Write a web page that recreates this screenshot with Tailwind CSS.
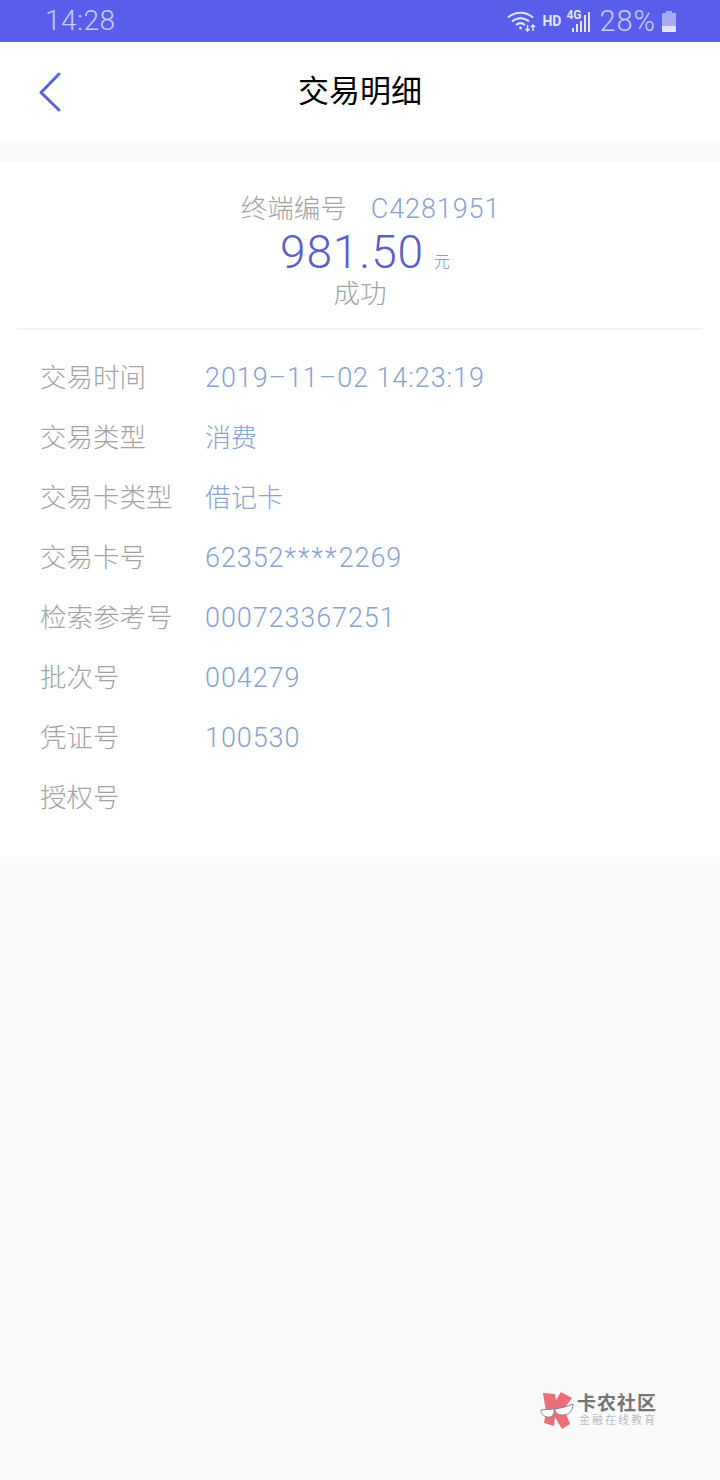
<!DOCTYPE html>
<html lang="en">
<head>
    <meta charset="UTF-8">
    <meta name="viewport" content="width=device-width, initial-scale=1.0">
    <title>交易明细</title>
    <script src="https://cdn.jsdelivr.net/npm/@tailwindcss/browser@4"></script>
</head>
<body class="overflow-hidden">
<div class="relative w-[720px] h-[1480px] bg-[#fafafa] font-['Roboto','Noto_Sans_CJK_SC',sans-serif] font-light">
    <!-- status bar -->
    <div class="h-[42px] bg-[#585eea] flex items-center justify-between pl-[45px] pr-[44px] text-[#c9cbf8]">
        <span class="text-[28px] tracking-[0.5px] leading-none">14:28</span>
        <div class="flex items-center">
            <svg width="30" height="22" viewBox="0 0 30 22" fill="none" stroke="#e3e4fc" stroke-width="2">
                <path d="M1 7.5C8 1 19 1 26 7.5"/>
                <path d="M5 11.5C10 7 17 7 22 11.5"/>
                <path d="M9 15C12 12.5 15 12.5 18 15"/>
                <circle cx="13.5" cy="18" r="1.4" fill="#e3e4fc" stroke="none"/>
                <path d="M20.500 15v6M18.500 19l2 2 2-2M26 21v-6M24 17l2-2 2 2" stroke-width="1.500"/>
            </svg>
            <span class="ml-[5px] text-[14px] leading-none font-bold text-[#e3e4fc]">HD</span>
            <div class="relative ml-[5px] w-[25px] h-[24px]">
                <span class="absolute left-0 top-0 text-[12px] leading-none font-bold text-[#e3e4fc]">4G</span>
                <svg class="absolute left-0 top-0" width="25" height="24" viewBox="0 0 25 24" fill="#e3e4fc">
                    <rect x="6" y="19" width="2" height="4"/>
                    <rect x="10" y="15" width="2" height="8"/>
                    <rect x="14" y="12" width="2" height="11"/>
                    <rect x="18" y="6" width="2" height="17"/>
                    <rect x="22" y="3" width="2" height="20"/>
                </svg>
            </div>
            <span class="ml-[8px] text-[29px] tracking-[1px] leading-none">28%</span>
            <div class="ml-[6px] relative w-[14px] h-[21px]">
                <div class="absolute left-[4px] top-0 w-[6px] h-[3px] bg-[#a9acf5]"></div>
                <div class="absolute left-0 top-[2px] w-[14px] h-[19px] rounded-[1px] bg-[#a9acf5]"></div>
                <div class="absolute left-0 bottom-0 w-[14px] h-[6px] rounded-b-[1px] bg-[#e3e4fc]"></div>
            </div>
        </div>
    </div>

    <!-- header -->
    <div class="relative h-[98px] bg-white flex items-center justify-center">
        <svg class="absolute left-[38px] top-[30px]" width="24" height="40" viewBox="0 0 24 40" fill="none" stroke="#5a60d8" stroke-width="3" stroke-linecap="round" stroke-linejoin="round">
            <path d="M21 2L3 20.500L21 38"/>
        </svg>
        <span class="text-[31px] leading-none text-black font-normal">交易明细</span>
    </div>

    <!-- card -->
    <div class="mt-[22px] h-[695px] bg-white">
        <div class="h-[168px] mx-[17px] border-b-2 border-[#eff0fa] flex flex-col items-center pt-[31px]">
            <div class="flex items-center h-[32px] ml-[21px] text-[26.500px] leading-none">
                <span class="text-[#a3a3a3]">终端编号</span>
                <span class="ml-[24px] text-[27px] tracking-[0.9px] text-[#8aa3cf]">C4281951</span>
            </div>
            <div class="flex items-end h-[52px] mt-[1px] ml-[10px]">
                <span class="text-[46px] tracking-[0.9px] leading-[52px] text-[#5a60c8]">981.50</span>
                <span class="ml-[10px] mb-[8px] text-[16px] leading-none text-[#7f88c4]">元</span>
            </div>
            <div class="text-[26.500px] leading-[32px] text-[#a3a3a3]">成功</div>
        </div>
        <div class="pt-[18px] pl-[40px] flex flex-col text-[26.500px]">
            <div class="flex h-[60px] items-center"><span class="w-[165px] text-[#a3a3a3]">交易时间</span><span class="text-[27px] tracking-[0.9px] text-[#8aa3cf]">2019–11–02 14:23:19</span></div>
            <div class="flex h-[60px] items-center"><span class="w-[165px] text-[#a3a3a3]">交易类型</span><span class="text-[26px] text-[#8aa3cf]">消费</span></div>
            <div class="flex h-[60px] items-center"><span class="w-[165px] text-[#a3a3a3]">交易卡类型</span><span class="text-[26px] text-[#8aa3cf]">借记卡</span></div>
            <div class="flex h-[60px] items-center"><span class="w-[165px] text-[#a3a3a3]">交易卡号</span><span class="text-[27px] tracking-[0.9px] text-[#8aa3cf]">62352<span class="tracking-[2.100px]">****</span>2269</span></div>
            <div class="flex h-[60px] items-center"><span class="w-[165px] text-[#a3a3a3]">检索参考号</span><span class="text-[27px] tracking-[0.9px] text-[#8aa3cf]">000723367251</span></div>
            <div class="flex h-[60px] items-center"><span class="w-[165px] text-[#a3a3a3]">批次号</span><span class="text-[27px] tracking-[0.9px] text-[#8aa3cf]">004279</span></div>
            <div class="flex h-[60px] items-center"><span class="w-[165px] text-[#a3a3a3]">凭证号</span><span class="text-[27px] tracking-[0.9px] text-[#8aa3cf]">100530</span></div>
            <div class="flex h-[60px] items-center"><span class="w-[165px] text-[#a3a3a3]">授权号</span></div>
        </div>
    </div>

    <!-- watermark -->
    <div class="absolute left-[540px] top-[1392px] flex items-center">
        <svg width="36" height="37" viewBox="0 0 36 37">
            <path d="M3 1L15 2L16 8L21 0L32 6L24 17L30 32L22 37L15 25L14 34L4 31L6 20Z" fill="#ea6d78"/>
            <path d="M1 18L14 17C15 22 12 26 7 25C3 24 1 22 1 18Z" fill="#ffffff" stroke="#8a8483" stroke-width="1"/>
            <path d="M15 17C20 16 27 15 33 12C33 19 29 23 23 23C18 23 15 21 15 17Z" fill="#ffffff" stroke="#8a8483" stroke-width="1"/>
        </svg>
        <div class="ml-[1px] flex flex-col">
            <span class="text-[19px] leading-[20px] font-bold tracking-[1px] text-[#757575]">卡农社区</span>
            <span class="ml-[2px] text-[11px] leading-[14px] tracking-[2px] text-[#a5a5a5]">金融在线教育</span>
        </div>
    </div>
</div>
</body>
</html>
